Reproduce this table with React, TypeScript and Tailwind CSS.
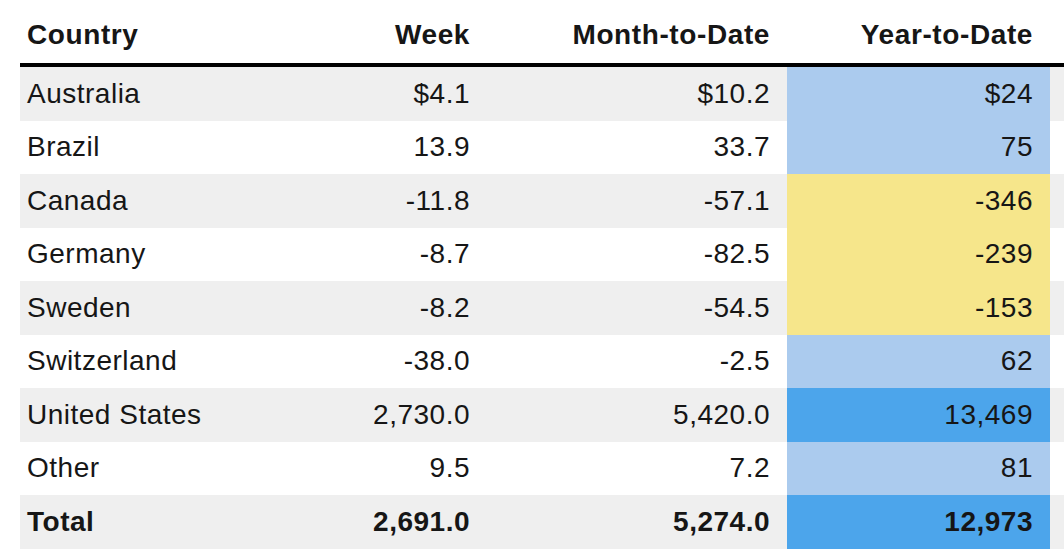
const rows = [
  { country: 'Australia', week: '$4.1', mtd: '$10.2', ytd: '$24', tone: 'light' },
  { country: 'Brazil', week: '13.9', mtd: '33.7', ytd: '75', tone: 'light' },
  { country: 'Canada', week: '-11.8', mtd: '-57.1', ytd: '-346', tone: 'yellow' },
  { country: 'Germany', week: '-8.7', mtd: '-82.5', ytd: '-239', tone: 'yellow' },
  { country: 'Sweden', week: '-8.2', mtd: '-54.5', ytd: '-153', tone: 'yellow' },
  { country: 'Switzerland', week: '-38.0', mtd: '-2.5', ytd: '62', tone: 'light' },
  { country: 'United States', week: '2,730.0', mtd: '5,420.0', ytd: '13,469', tone: 'strong' },
  { country: 'Other', week: '9.5', mtd: '7.2', ytd: '81', tone: 'light' },
  { country: 'Total', week: '2,691.0', mtd: '5,274.0', ytd: '12,973', tone: 'strong', bold: true },
];

const toneClass: Record<string, string> = {
  light: 'bg-[#abcbee]',
  yellow: 'bg-[#f6e68b]',
  strong: 'bg-[#4ca5eb]',
};

export default function App() {
  return (
    <div className="w-[1064px] h-[560px] bg-white pl-5 text-[#161616] font-['Liberation_Sans',Arial,sans-serif] text-[28px] tracking-[0.5px] overflow-hidden">
      {/* header */}
      <div className="grid grid-cols-[167px_300px_300px_263px_14px] h-[67px] border-b-4 border-black font-bold tracking-[0.6px] items-center pt-[7px]">
        <div className="pl-[7px]">Country</div>
        <div className="text-right pr-[17px]">Week</div>
        <div className="text-right pr-[17px]">Month-to-Date</div>
        <div className="text-right pr-[17px]">Year-to-Date</div>
        <div />
      </div>

      {rows.map((r, i) => (
        <div
          key={r.country}
          className={`grid grid-cols-[167px_300px_300px_263px_14px] h-[53.5px] ${i % 2 === 0 ? 'bg-[#efefef]' : 'bg-white'} ${r.bold ? 'font-bold' : ''}`}
        >
          <div className="pl-[7px] flex items-center whitespace-nowrap">{r.country}</div>
          <div className="flex items-center justify-end pr-[17px]">{r.week}</div>
          <div className="flex items-center justify-end pr-[17px]">{r.mtd}</div>
          <div className={`flex items-center justify-end pr-[17px] ${toneClass[r.tone]}`}>{r.ytd}</div>
          <div />
        </div>
      ))}
    </div>
  );
}
